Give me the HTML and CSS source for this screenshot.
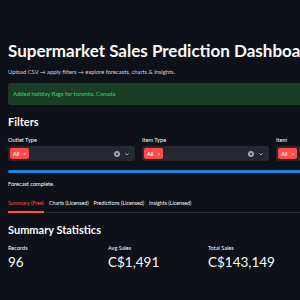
FILE: index.html
```html
<!DOCTYPE html>
<html lang="en">
<head>
    <meta charset="UTF-8">
    <meta name="viewport" content="width=device-width, initial-scale=1.0">
    <title>Supermarket Sales Prediction Dashboard</title>
    <link rel="stylesheet" href="styles.css">
</head>
<body>
    <div class="app">
        <h1 class="title">Supermarket Sales Prediction Dashboard</h1>
        <p class="lead">Upload CSV → apply filters → explore forecasts, charts &amp; insights.</p>
        <div class="alert">Added holiday flags for toronto, Canada</div>

        <h3 class="section">Filters</h3>
        <div class="filters">
            <div class="field">
                <label>Outlet Type</label>
                <div class="select">
                    <span class="tag">All <span class="tag-x">×</span></span>
                    <span class="select-icons">
                        <svg width="6" height="6" viewBox="0 0 6 6"><circle cx="3" cy="3" r="3" fill="#a3a8b8"/><path d="M1.8 1.8l2.4 2.4M4.2 1.8l-2.4 2.4" stroke="#262730" stroke-width="0.8"/></svg>
                        <svg width="6" height="6" viewBox="0 0 6 6"><path d="M1.2 2.2l1.8 1.8 1.8-1.8" stroke="#a3a8b8" stroke-width="0.9" fill="none"/></svg>
                    </span>
                </div>
            </div>
            <div class="field">
                <label>Item Type</label>
                <div class="select">
                    <span class="tag">All <span class="tag-x">×</span></span>
                    <span class="select-icons">
                        <svg width="6" height="6" viewBox="0 0 6 6"><circle cx="3" cy="3" r="3" fill="#a3a8b8"/><path d="M1.8 1.8l2.4 2.4M4.2 1.8l-2.4 2.4" stroke="#262730" stroke-width="0.8"/></svg>
                        <svg width="6" height="6" viewBox="0 0 6 6"><path d="M1.2 2.2l1.8 1.8 1.8-1.8" stroke="#a3a8b8" stroke-width="0.9" fill="none"/></svg>
                    </span>
                </div>
            </div>
            <div class="field">
                <label>Item</label>
                <div class="select">
                    <span class="tag">All <span class="tag-x">×</span></span>
                    <span class="select-icons">
                        <svg width="6" height="6" viewBox="0 0 6 6"><circle cx="3" cy="3" r="3" fill="#a3a8b8"/><path d="M1.8 1.8l2.4 2.4M4.2 1.8l-2.4 2.4" stroke="#262730" stroke-width="0.8"/></svg>
                        <svg width="6" height="6" viewBox="0 0 6 6"><path d="M1.2 2.2l1.8 1.8 1.8-1.8" stroke="#a3a8b8" stroke-width="0.9" fill="none"/></svg>
                    </span>
                </div>
            </div>
        </div>

        <div class="progress"></div>
        <p class="status">Forecast complete.</p>

        <div class="tabs">
            <span class="tab active">Summary (Free)</span>
            <span class="tab">Charts (Licensed)</span>
            <span class="tab">Predictions (Licensed)</span>
            <span class="tab">Insights (Licensed)</span>
        </div>

        <h3 class="section stats">Summary Statistics</h3>
        <div class="metrics">
            <div class="metric"><div class="metric-label">Records</div><div class="metric-value">96</div></div>
            <div class="metric"><div class="metric-label">Avg Sales</div><div class="metric-value">C$1,491</div></div>
            <div class="metric"><div class="metric-label">Total Sales</div><div class="metric-value">C$143,149</div></div>
        </div>
    </div>
</body>
</html>
```

FILE: styles.css
```css
* { margin: 0; padding: 0; box-sizing: border-box; }
body {
    background: #0e1117;
    color: #fafafa;
    font-family: Lato, "Liberation Sans", sans-serif;
    overflow: hidden;
    width: 300px;
    height: 300px;
}
.app { width: 411px; padding: 0 8px; }

.title {
    margin-top: 40px;
    font-size: 17px;
    line-height: 22px;
    font-weight: 700;
    white-space: nowrap;
}
.lead {
    margin-top: 5px;
    font-size: 5.8px;
    line-height: 10px;
    color: #d5d6d8;
}
.alert {
    margin-top: 6px;
    height: 22px;
    line-height: 22px;
    padding: 0 5px;
    border-radius: 3px;
    background: #1a3d28;
    color: #3dd56d;
    font-size: 5.9px;
}

.section {
    margin-top: 10px;
    font-size: 11px;
    line-height: 14px;
    font-weight: 700;
}

.filters {
    display: grid;
    grid-template-columns: 127px 127px 127px;
    gap: 7px;
    margin-top: 7px;
}
.field label {
    display: block;
    font-size: 5.6px;
    line-height: 8px;
    margin-bottom: 2px;
}
.select {
    height: 15px;
    background: #262730;
    border-radius: 3px;
    display: flex;
    align-items: center;
    padding: 0 5px 0 2px;
}
.tag {
    display: flex;
    align-items: center;
    gap: 4px;
    height: 11px;
    padding: 0 3px;
    border-radius: 2px;
    background: #ff4b4b;
    color: #fff;
    font-size: 5.6px;
}
.tag-x { font-size: 5px; }
.select-icons {
    margin-left: auto;
    display: flex;
    align-items: center;
    gap: 4px;
}
.select-icons svg { display: block; }

.progress {
    margin-top: 9px;
    height: 3px;
    border-radius: 2px;
    background: #1c83e1;
}
.status {
    margin-top: 7px;
    font-size: 5.6px;
    line-height: 8px;
}

.tabs {
    margin-top: 11px;
    display: flex;
    gap: 5px;
    box-shadow: inset 0 -1px 0 #2b2d36;
}
.tab {
    font-size: 5.3px;
    line-height: 8px;
    padding-bottom: 4px;
    border-bottom: 2px solid transparent;
    white-space: nowrap;
}
.tab.active { color: #ff4b4b; border-bottom-color: #ff4b4b; }

.stats { margin-top: 10px; }

.metrics {
    display: grid;
    grid-template-columns: repeat(4, 94px);
    gap: 6px;
    margin-top: 7px;
}
.metric-label { font-size: 5.6px; line-height: 8px; }
.metric-value {
    margin-top: 2px;
    font-size: 13.5px;
    line-height: 16px;
}
```
